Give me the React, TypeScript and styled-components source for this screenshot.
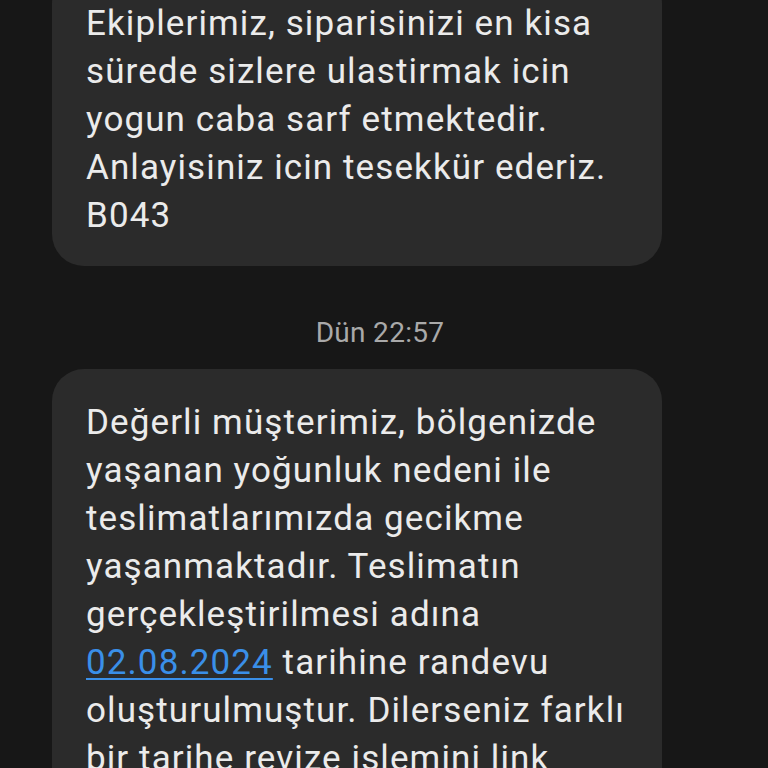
import React from 'react';
import styled, { createGlobalStyle } from 'styled-components';

const GlobalStyle = createGlobalStyle`
  html, body {
    margin: 0;
    padding: 0;
    background: #171717;
    overflow: hidden;
  }
  body {
    font-family: Roboto, "Noto Sans", "Liberation Sans", sans-serif;
  }
`;

const Screen = styled.div`
  width: 768px;
  height: 768px;
  overflow: hidden;
  background: #171717;
`;

const Thread = styled.div`
  display: flex;
  flex-direction: column;
  margin-top: -28px;
  padding: 0 106px 0 52px;
`;

const Bubble = styled.div<{ $top?: number; $bottom?: number }>`
  background: #2b2b2b;
  border-radius: 32px;
  padding: ${(p) => p.$top ?? 28}px 30px ${(p) => p.$bottom ?? 26}px 34px;
  color: #ebebeb;
  font-size: 35px;
  letter-spacing: 1.1px;
  line-height: 48px;
  white-space: nowrap;
`;

const Stamp = styled.div`
  text-align: center;
  color: #a9a9a9;
  font-size: 28px;
  letter-spacing: 0.3px;
  line-height: 32px;
  padding: 51px 0 20px;
  margin-left: 46px;
`;

const DateLink = styled.a`
  color: #3a8fe8;
  text-decoration: underline;
  text-decoration-thickness: 2px;
  text-underline-offset: 4px;
`;

const lines = (items: string[]) =>
  items.map((l, i) => (
    <React.Fragment key={i}>
      {i > 0 && <br />}
      {l}
    </React.Fragment>
  ));

export default function App() {
  return (
    <Screen>
      <GlobalStyle />
      <Thread>
        <Bubble>
          {lines([
            'Ekiplerimiz, siparisinizi en kisa',
            'sürede sizlere ulastirmak icin',
            'yogun caba sarf etmektedir.',
            'Anlayisiniz icin tesekkür ederiz.',
            'B043',
          ])}
        </Bubble>
        <Stamp>Dün 22:57</Stamp>
        <Bubble $top={30} $bottom={40}>
          {lines([
            'Değerli müşterimiz, bölgenizde',
            'yaşanan yoğunluk nedeni ile',
            'teslimatlarımızda gecikme',
            'yaşanmaktadır. Teslimatın',
            'gerçekleştirilmesi adına',
          ])}
          <br />
          <DateLink>02.08.2024</DateLink> tarihine randevu
          <br />
          oluşturulmuştur. Dilerseniz farklı
          <br />
          bir tarihe revize islemini link
          <br />
          üzerinden yapabilirsiniz.
        </Bubble>
      </Thread>
    </Screen>
  );
}
